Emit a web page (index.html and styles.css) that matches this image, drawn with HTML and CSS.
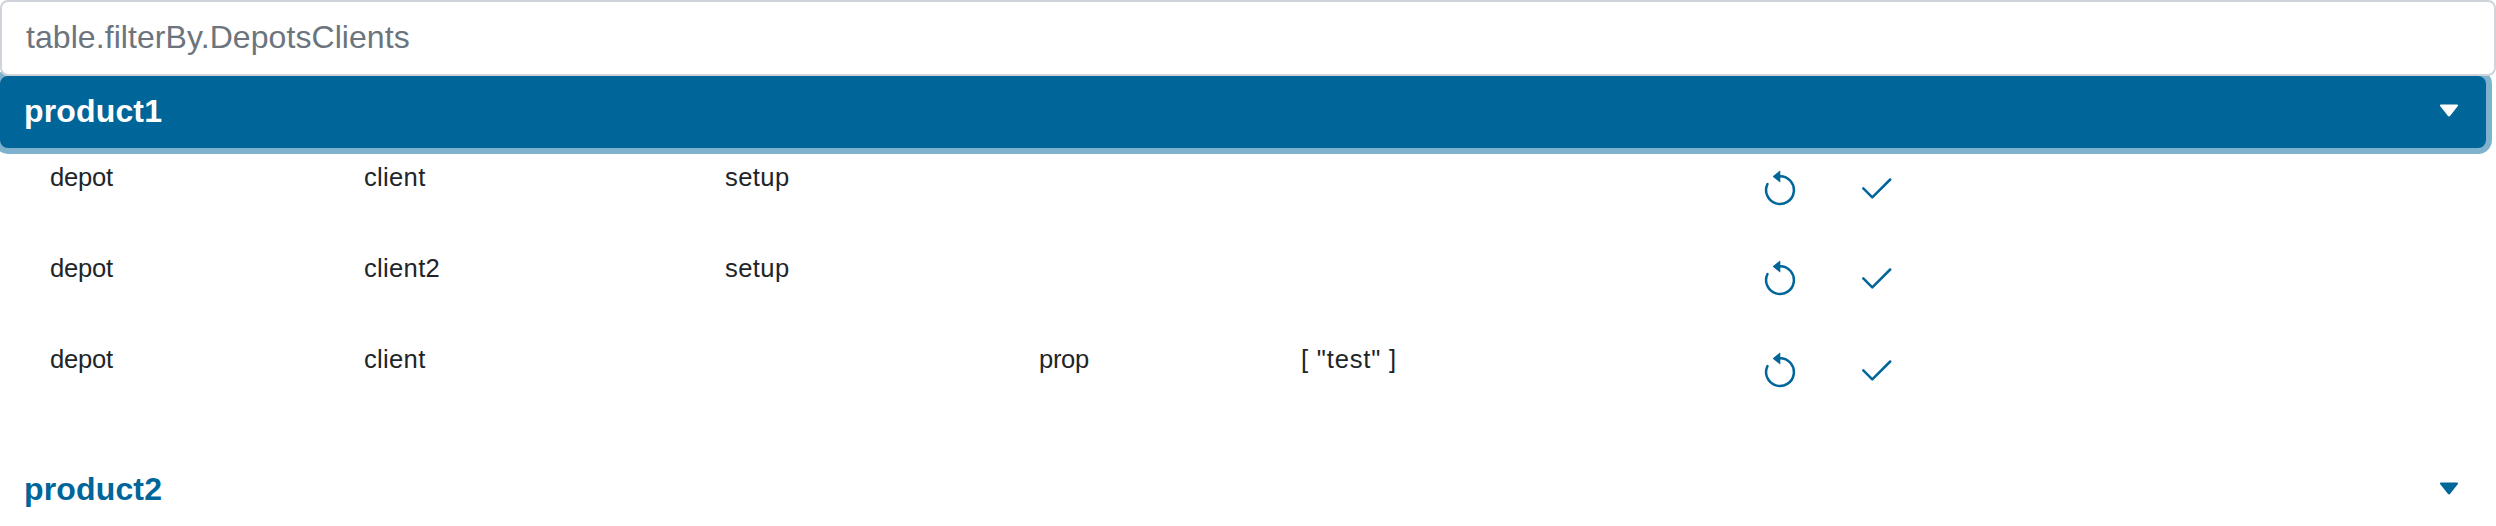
FILE: index.html
```
<!DOCTYPE html>
<html lang="en">
<head>
<meta charset="utf-8">
<title>Depots and clients</title>
<link rel="stylesheet" href="styles.css">
</head>
<body>
<svg class="sprite" width="0" height="0">
  <symbol id="reset" viewBox="0 0 36 40">
    <path d="M18 8.2A13.9 13.9 0 1 1 5.5 16" fill="none" stroke="currentColor" stroke-width="2.5" stroke-linecap="round"/>
    <path d="M18.3 2.9v11.1a.3.3 0 0 1-.5.3l-6.6-5.3a.6.6 0 0 1 0-.9l6.6-5.4a.3.3 0 0 1 .5.2z" fill="currentColor"/>
  </symbol>
  <symbol id="check" viewBox="0 0 36 40">
    <path d="M5.3 20.3l9 9L32.2 11.5" fill="none" stroke="currentColor" stroke-width="2.5" stroke-linecap="round" stroke-linejoin="round"/>
  </symbol>
  <symbol id="caret" viewBox="0 0 20 14">
    <path d="M2 .5h16c1 0 1.4 1 .7 1.8l-7.5 9.5a1.5 1.5 0 0 1-2.4 0L1.3 2.3C.6 1.5 1 .5 2 .5z" fill="currentColor"/>
  </symbol>
</svg>
<input class="filter" type="text" placeholder="table.filterBy.DepotsClients">
<div class="products">
  <button class="product active"><span>product1</span><svg class="caret"><use href="#caret"/></svg></button>
  <div class="rows">
    <div class="row">
      <span class="depot">depot</span><span class="client">client</span><span class="setup">setup</span><span class="prop"></span><span class="value"></span>
      <svg class="icon"><use href="#reset"/></svg><svg class="icon"><use href="#check"/></svg>
    </div>
    <div class="row raised">
      <span class="depot">depot</span><span class="client">client2</span><span class="setup">setup</span><span class="prop"></span><span class="value"></span>
      <svg class="icon"><use href="#reset"/></svg><svg class="icon"><use href="#check"/></svg>
    </div>
    <div class="row">
      <span class="depot">depot</span><span class="client">client</span><span class="setup"></span><span class="prop">prop</span><span class="value">[ "test" ]</span>
      <svg class="icon"><use href="#reset"/></svg><svg class="icon"><use href="#check"/></svg>
    </div>
  </div>
  <button class="product"><span>product2</span><svg class="caret"><use href="#caret"/></svg></button>
</div>
</body>
</html>
```
FILE: styles.css
```
* { box-sizing: border-box; }
body {
  margin: 0;
  background: #fff;
  color: #212529;
  font-family: "Liberation Sans", Arial, sans-serif;
  overflow: hidden;
}
.sprite { display: none; }
.filter {
  display: block;
  position: relative;
  z-index: 1;
  width: 100%;
  height: 76px;
  padding: 11px 24px 13px;
  border: 2px solid #ced4da;
  border-radius: 8px;
  background: #fff;
  font: 32px/48px "Liberation Sans", Arial, sans-serif;
  letter-spacing: .07px;
  outline: 0;
}
.filter::placeholder { color: #6c757d; opacity: 1; }
.products { width: 2486px; }
.product {
  display: flex;
  align-items: center;
  justify-content: space-between;
  width: 100%;
  height: 72px;
  padding: 0 27px 2px 24px;
  border: 0;
  border-radius: 8px;
  background: transparent;
  color: #006599;
  font: bold 32px/48px "Liberation Sans", Arial, sans-serif;
  letter-spacing: .15px;
  text-align: left;
}
.product.active {
  background: #006599;
  color: #fff;
  box-shadow: 0 0 0 6px rgba(0, 101, 153, .5);
}
.caret { width: 20px; height: 14px; }
.rows { padding: 10px 0 23px 50px; }
.row {
  display: grid;
  grid-template-columns: 314px 361px 314px 262px 461px 96px 36px;
  height: 91px;
  font-size: 25.6px;
  line-height: 38px;
}
.depot { letter-spacing: -.24px; }
.client { letter-spacing: .3px; }
.setup { letter-spacing: .4px; }
.prop { letter-spacing: -.33px; }
.value { letter-spacing: .81px; }
.icon {
  width: 36px;
  height: 40px;
  margin-top: 10px;
  color: #006599;
}
.raised .icon { margin-top: 9px; }
```
